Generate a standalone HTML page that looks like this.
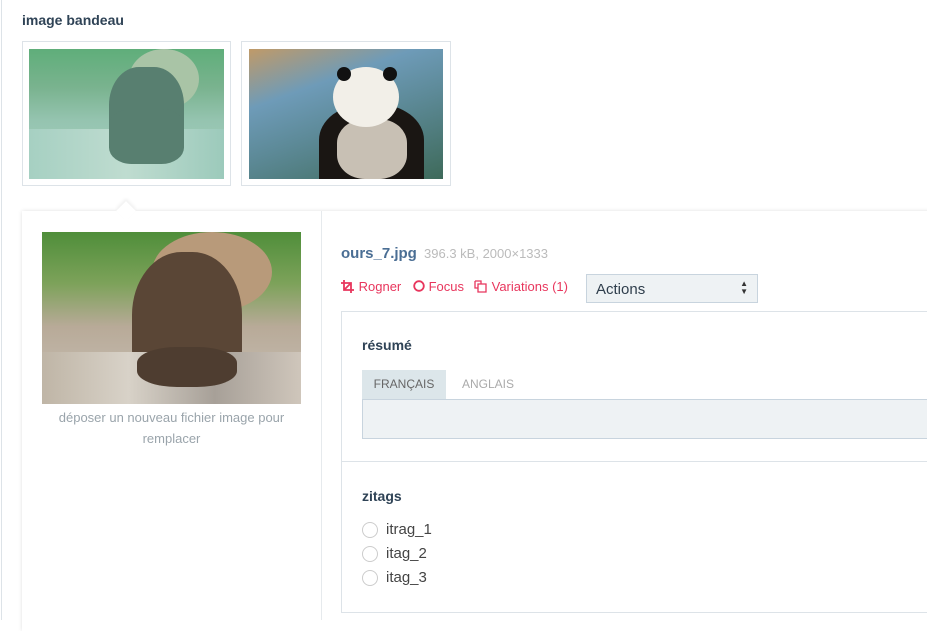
<!DOCTYPE html>
<html><head><meta charset="utf-8"><style>
*{box-sizing:border-box;margin:0;padding:0}
body{width:927px;height:620px;overflow:hidden;background:#fff;font-family:"Liberation Sans",sans-serif;position:relative}
.a{position:absolute}
.img{overflow:hidden}
.lb{left:1px;top:0;width:1px;height:620px;background:#dde3e8}
.title{left:22px;top:12px;font-size:14px;font-weight:bold;color:#2f4356}
.th{border:1px solid #dde3e8;background:#fff}
.panel{left:22px;top:211px;width:940px;height:420px;background:#fff;box-shadow:0 0 4px rgba(0,0,0,.12)}
.arrow{left:119px;top:204px;width:14px;height:14px;background:#fff;transform:rotate(45deg);box-shadow:-2px -2px 3px rgba(0,0,0,.06)}
.lnk{color:#e8365d;font-size:13px;top:279px}
.radio{width:16px;height:16px;border:1px solid #ccc;border-radius:50%;left:362px}
.rl{left:386px;font-size:15px;color:#444}
</style></head><body>
<div class="a lb"></div>
<div class="a title">image bandeau</div>
<div class="a th" style="left:22px;top:41px;width:209px;height:145px"></div>
<div class="a img" style="left:29px;top:49px;width:195px;height:130px;background:linear-gradient(180deg,#5fae7a 0%,#7ab38f 30%,#95c4b0 55%,#a8d0c2 100%)">
 <div class="a" style="left:100px;top:0;width:70px;height:60px;border-radius:50%;background:#a9c4a6"></div>
 <div class="a" style="left:80px;top:18px;width:75px;height:95px;border-radius:40% 40% 30% 30%;background:#587f70"></div>
 <div class="a" style="left:0;top:80px;width:195px;height:50px;background:linear-gradient(90deg,#a6d0c2,#bfdcd0,#9ccabb)"></div>
 <div class="a" style="left:80px;top:60px;width:75px;height:55px;border-radius:30%;background:#587f70"></div>
</div>
<div class="a th" style="left:241px;top:41px;width:210px;height:145px"></div>
<div class="a img" style="left:249px;top:49px;width:194px;height:130px;background:linear-gradient(160deg,#c09a68 0%,#6e9bb8 30%,#5d8a98 55%,#3e6a5a 100%)">
 <div class="a" style="left:70px;top:55px;width:105px;height:80px;border-radius:45% 45% 0 0;background:#1a1613"></div>
 <div class="a" style="left:88px;top:70px;width:70px;height:60px;border-radius:40%;background:#c8c0b4"></div>
 <div class="a" style="left:84px;top:18px;width:66px;height:60px;border-radius:50%;background:#f2efe8"></div>
 <div class="a" style="left:88px;top:18px;width:14px;height:14px;border-radius:50%;background:#111"></div>
 <div class="a" style="left:134px;top:18px;width:14px;height:14px;border-radius:50%;background:#111"></div>
</div>
<div class="a panel"></div>
<div class="a arrow"></div>
<div class="a" style="left:321px;top:211px;width:1px;height:409px;background:#e6eaed"></div>
<div class="a img" style="left:42px;top:232px;width:259px;height:172px;background:linear-gradient(180deg,#4f8e3a 0%,#7da25a 30%,#b8aa98 55%,#c9c2b8 100%)">
 <div class="a" style="left:110px;top:0;width:120px;height:80px;border-radius:50%;background:#b89a7a"></div>
 <div class="a" style="left:90px;top:20px;width:110px;height:140px;border-radius:45% 45% 30% 30%;background:#5a4636"></div>
 <div class="a" style="left:0;top:120px;width:259px;height:52px;background:linear-gradient(90deg,#bfb5a6,#d8d2c8,#a7a098,#cfc6bb)"></div>
 <div class="a" style="left:95px;top:115px;width:100px;height:40px;border-radius:40%;background:#4e3d30"></div>
</div>
<div class="a" style="left:42px;top:407px;width:259px;text-align:center;font-size:13px;line-height:21px;color:#9aa4ab">déposer un nouveau fichier image pour remplacer</div>
<div class="a" style="left:341px;top:245px;font-size:15px;font-weight:bold;color:#4a6e94">ours_7.jpg <span style="font-weight:normal;font-size:13px;color:#bbb;margin-left:3px">396.3 kB, 2000×1333</span></div>
<div class="a lnk" style="left:341px"><svg width="14" height="13" viewBox="0 0 14 13" style="vertical-align:-2px"><path d="M3 0v10h10M0 3h10v10M3 10L10 3" stroke="#e8365d" stroke-width="1.8" fill="none"/></svg> Rogner</div>
<div class="a lnk" style="left:413px"><svg width="12" height="12" viewBox="0 0 12 12" style="vertical-align:-1px"><circle cx="6" cy="6" r="4.8" stroke="#e8365d" stroke-width="1.8" fill="none"/></svg> Focus</div>
<div class="a lnk" style="left:474px"><svg width="14" height="13" viewBox="0 0 14 13" style="vertical-align:-2px"><path d="M1 1h6v3M4 4h8v8H4z M1 1v7h3" stroke="#e8365d" stroke-width="1.3" fill="none"/></svg> Variations (1)</div>
<div class="a" style="left:586px;top:274px;width:172px;height:29px;background:#eef2f4;border:1px solid #c8d4de;font-size:15px;color:#2f3e4c;padding:6px 0 0 9px">Actions<span class="a" style="right:9px;top:5px;font-size:8px;line-height:8px;color:#333">▲<br>▼</span></div>
<div class="a" style="left:341px;top:311px;width:600px;height:302px;border:1px solid #dde3e8"></div>
<div class="a" style="left:362px;top:337px;font-size:14px;font-weight:bold;color:#2f4356">résumé</div>
<div class="a" style="left:362px;top:370px;width:84px;height:29px;background:#dce6ea;font-size:12px;color:#666;text-align:center;line-height:28px">FRANÇAIS</div>
<div class="a" style="left:462px;top:370px;font-size:12px;color:#aaa;line-height:28px">ANGLAIS</div>
<div class="a" style="left:362px;top:399px;width:580px;height:40px;background:#eef2f4;border:1px solid #c8d4de"></div>
<div class="a" style="left:342px;top:461px;width:600px;height:1px;background:#dde3e8"></div>
<div class="a" style="left:362px;top:488px;font-size:14px;font-weight:bold;color:#2f4356">zitags</div>
<div class="a radio" style="top:522px"></div><div class="a rl" style="top:521px">itrag_1</div>
<div class="a radio" style="top:546px"></div><div class="a rl" style="top:545px">itag_2</div>
<div class="a radio" style="top:570px"></div><div class="a rl" style="top:569px">itag_3</div>
</body></html>
